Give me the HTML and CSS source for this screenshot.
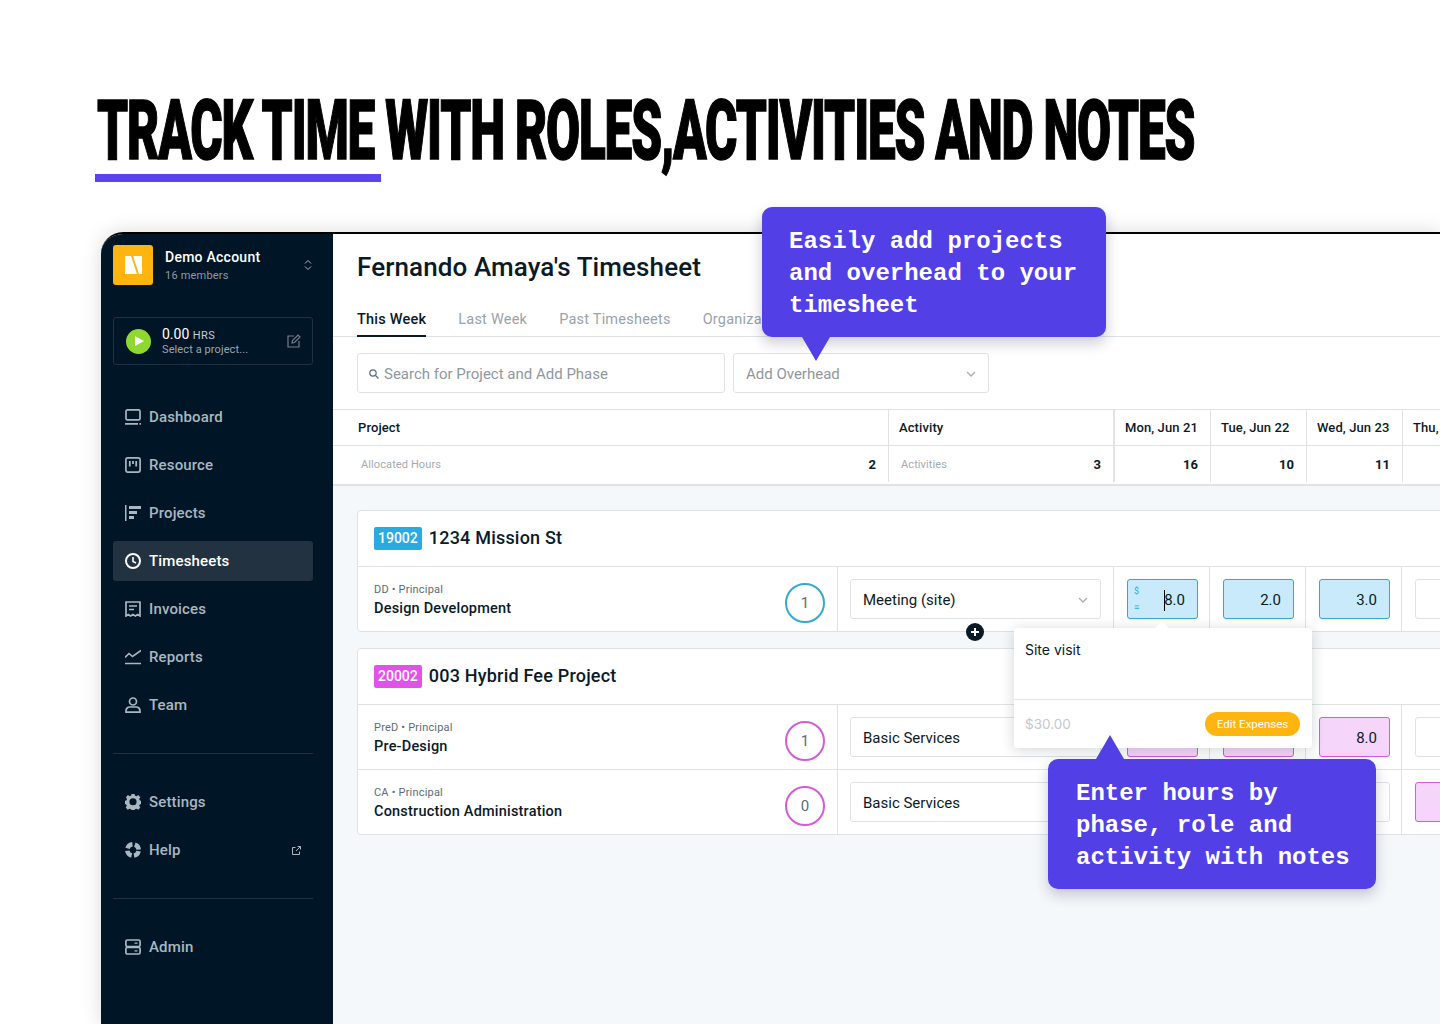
FILE: index.html
```html
<!DOCTYPE html>
<html lang="en">
  <head>
    <meta charset="utf-8">
    <title>Track time with roles, activities and notes</title>
    <link rel="stylesheet" href="styles.css">
  </head>
  <body>
    <header class="hero">
      <h1 class="hero-title">TRACK TIME WITH ROLES,ACTIVITIES AND NOTES</h1>
      <div class="hero-rule"></div>
    </header>

    <div class="app">
      <aside class="sidebar">
        <div class="account">
          <div class="account-logo">
            <svg width="17" height="18" viewBox="0 0 17 18"><path fill="#fff" d="M0 0h6l6 18H0zM8 0h9v18h-3z"/></svg>
          </div>
          <div class="account-text">
            <div class="account-name">Demo Account</div>
            <div class="account-sub">16 members</div>
          </div>
          <svg class="account-caret" width="8" height="12" viewBox="0 0 8 12" fill="none" stroke="#aeb8c1" stroke-width="1"><path d="M1 4.500 4 1.500l3 3M1 7.500l3 3 3-3"/></svg>
        </div>

        <div class="timer">
          <div class="timer-play"><svg width="9" height="10" viewBox="0 0 9 10"><path fill="#fff" d="M0 0l9 5-9 5z"/></svg></div>
          <div class="timer-text">
            <div class="timer-hours">0.00 <span>HRS</span></div>
            <div class="timer-sub">Select a project...</div>
          </div>
          <svg class="timer-edit" width="14" height="14" viewBox="0 0 14 14" fill="none" stroke="#6f7f8c" stroke-width="1.200"><path d="M7 2H1v11h11V7"/><path d="M5 9l.5-2.500L11 1l2 2-5.500 5.500z"/></svg>
        </div>

        <nav class="nav nav-main">
          <a class="nav-item"><svg width="16" height="16" viewBox="0 0 16 16" fill="none" stroke="currentColor" stroke-width="1.700"><rect x="1" y=".9" width="14" height="10" rx="1.500"/><path d="M0 14.800h13M14.500 14.800h1.500"/></svg>Dashboard</a>
          <a class="nav-item"><svg width="16" height="16" viewBox="0 0 16 16" fill="none" stroke="currentColor" stroke-width="1.700"><rect x=".9" y=".9" width="14.200" height="14.200" rx="2"/><path d="M4.800 4v5.500M8 4v3M11.200 4v5.500" stroke-width="1.800"/></svg>Resource</a>
          <a class="nav-item"><svg width="16" height="16" viewBox="0 0 16 16" fill="currentColor"><rect x="0" y="0" width="1.500" height="16"/><rect x="4" y="1" width="12" height="3"/><rect x="4" y="6" width="8" height="3"/><rect x="4" y="11" width="5" height="3"/></svg>Projects</a>
          <a class="nav-item active"><svg width="16" height="16" viewBox="0 0 16 16" fill="none" stroke="currentColor" stroke-width="2"><circle cx="8" cy="8" r="7"/><path d="M8 4v4.500l3 1.500" stroke-width="1.600"/></svg>Timesheets</a>
          <a class="nav-item"><svg width="16" height="16" viewBox="0 0 16 16" fill="none" stroke="currentColor" stroke-width="1.700"><path d="M1 15V1h14v14l-2.300-1.500-2.300 1.500L8 13.500 5.600 15l-2.300-1.500z"/><path d="M4 5h8M4 8.500h5"/></svg>Invoices</a>
          <a class="nav-item"><svg width="16" height="16" viewBox="0 0 16 16" fill="none" stroke="currentColor" stroke-width="1.600"><path d="M0 8.500l4-4 3.500 3L16 1.500M0 14.500h16"/></svg>Reports</a>
          <a class="nav-item"><svg width="16" height="16" viewBox="0 0 16 16" fill="none" stroke="currentColor" stroke-width="1.700"><circle cx="8" cy="4.500" r="3.500"/><path d="M1 15.200v-1.700c0-2 2-3.500 3.500-3.500h7c1.500 0 3.500 1.500 3.500 3.500v1.700z"/></svg>Team</a>
        </nav>

        <nav class="nav nav-second">
          <a class="nav-item"><svg width="16" height="16" viewBox="0 0 16 16"><path fill="currentColor" fill-rule="evenodd" d="M6.500 0h3l.4 2.100 1.500.7L13.300 1.700l2 2.200-1.100 1.800.6 1.500 2.200.5v3l-2.200.5-.6 1.500 1.100 1.800-2 2.200-1.900-1.100-1.500.7-.4 2.100h-3l-.4-2.100-1.500-.7-1.900 1.100-2-2.200 1.100-1.800-.6-1.500L-.8 10.700v-3l2.200-.5.6-1.500L.9 3.900l2-2.200 1.900 1.100 1.500-.7zM8 5a3.600 3.600 0 1 0 0 7.200A3.600 3.600 0 0 0 8 5z" transform="translate(0 -.6) scale(1 .98)"/></svg>Settings</a>
          <a class="nav-item"><svg width="16" height="16" viewBox="0 0 16 16" fill="none" stroke="currentColor" stroke-width="4.500"><circle cx="8" cy="8" r="5.700" stroke-dasharray="6.500 2.450" stroke-dashoffset="-1.200"/></svg>Help<svg class="nav-ext" width="9" height="9" viewBox="0 0 9 9" fill="none" stroke="currentColor" stroke-width="1"><path d="M3.500 1.500H.5v7h7V5.500M4 5l4.500-4.500M5.500.5h3v3"/></svg></a>
        </nav>

        <nav class="nav nav-admin">
          <a class="nav-item"><svg width="16" height="16" viewBox="0 0 16 16" fill="none" stroke="currentColor" stroke-width="1.700"><rect x=".9" y="1" width="14.200" height="6.500" rx="1.500"/><rect x=".9" y="8.500" width="14.200" height="6.500" rx="1.500"/><path d="M9.500 4.200h3M9.500 11.800h3" stroke-width="1.200"/></svg>Admin</a>
        </nav>
      </aside>

      <main class="main">
        <h2 class="page-title">Fernando Amaya's Timesheet</h2>

        <div class="tabs">
          <span class="tab active">This Week</span>
          <span class="tab">Last Week</span>
          <span class="tab">Past Timesheets</span>
          <span class="tab">Organization</span>
        </div>

        <div class="filters">
          <div class="field field-search">
            <svg width="10" height="10" viewBox="0 0 10 10" fill="none" stroke="#5d6b76" stroke-width="1.200"><circle cx="4" cy="4" r="3.200"/><path d="M6.500 6.500 9.500 9.500"/></svg>
            Search for Project and Add Phase
          </div>
          <div class="field field-overhead">
            Add Overhead
            <svg class="chevron" width="10" height="6" viewBox="0 0 10 6" fill="none" stroke="#a6aeb5" stroke-width="1.300"><path d="M1 1l4 4 4-4"/></svg>
          </div>
        </div>

        <div class="sheet-head">
          <div class="head-row">
            <div class="hcell hcell-project">Project</div>
            <div class="hcell hcell-activity">Activity</div>
            <div class="hcell hcell-day">Mon, Jun 21</div>
            <div class="hcell hcell-day">Tue, Jun 22</div>
            <div class="hcell hcell-day">Wed, Jun 23</div>
            <div class="hcell hcell-day">Thu,</div>
          </div>
          <div class="head-row head-totals">
            <div class="hcell hcell-project"><span class="total-label">Allocated Hours</span><b>2</b></div>
            <div class="hcell hcell-activity"><span class="total-label">Activities</span><b>3</b></div>
            <div class="hcell hcell-day num"><b>16</b></div>
            <div class="hcell hcell-day num"><b>10</b></div>
            <div class="hcell hcell-day num"><b>11</b></div>
            <div class="hcell hcell-day num"></div>
          </div>
        </div>

        <div class="sheet-body">
          <section class="card">
            <div class="card-head"><span class="code code-blue">19002</span>1234 Mission St</div>
            <div class="row row-blue">
              <div class="phase">
                <div class="phase-text">
                  <div class="phase-role">DD • Principal</div>
                  <div class="phase-name">Design Development</div>
                </div>
                <div class="count">1</div>
              </div>
              <div class="activity"><div class="select">Meeting (site)<svg class="chevron" width="10" height="6" viewBox="0 0 10 6" fill="none" stroke="#a6aeb5" stroke-width="1.300"><path d="M1 1l4 4 4-4"/></svg></div></div>
              <div class="day"><div class="hours filled focus">
                <span class="hour-icons">$<br>≡</span><span class="caret"></span>8.0
              </div></div>
              <div class="day"><div class="hours filled">2.0</div></div>
              <div class="day"><div class="hours filled">3.0</div></div>
              <div class="day"><div class="hours"></div></div>
            </div>
          </section>

          <section class="card">
            <div class="card-head"><span class="code code-pink">20002</span>003 Hybrid Fee Project</div>
            <div class="row row-pink">
              <div class="phase">
                <div class="phase-text">
                  <div class="phase-role">PreD • Principal</div>
                  <div class="phase-name">Pre-Design</div>
                </div>
                <div class="count">1</div>
              </div>
              <div class="activity"><div class="select">Basic Services</div></div>
              <div class="day"><div class="hours filled"></div></div>
              <div class="day"><div class="hours filled"></div></div>
              <div class="day"><div class="hours filled">8.0</div></div>
              <div class="day"><div class="hours"></div></div>
            </div>
            <div class="row row-pink">
              <div class="phase">
                <div class="phase-text">
                  <div class="phase-role">CA • Principal</div>
                  <div class="phase-name">Construction Administration</div>
                </div>
                <div class="count">0</div>
              </div>
              <div class="activity"><div class="select">Basic Services</div></div>
              <div class="day"><div class="hours"></div></div>
              <div class="day"><div class="hours"></div></div>
              <div class="day"><div class="hours"></div></div>
              <div class="day"><div class="hours filled"></div></div>
            </div>
          </section>
        </div>
      </main>
    </div>

    <div class="add-dot">
      <svg width="18" height="18" viewBox="0 0 18 18"><circle cx="9" cy="9" r="9" fill="#0b1a26"/><path d="M9 5v8M5 9h8" stroke="#fff" stroke-width="2"/></svg>
    </div>

    <div class="note">
      <div class="note-text">Site visit</div>
      <div class="note-foot">
        <span class="note-amount">$30.00</span>
        <span class="note-btn">Edit Expenses</span>
      </div>
    </div>

    <div class="callout callout-top">Easily add projects and overhead to your timesheet</div>
    <div class="callout callout-bottom">Enter hours by phase, role and activity with notes</div>
  </body>
</html>
```

FILE: styles.css
```css
* {
  box-sizing: border-box;
}

html,
body {
  margin: 0;
  height: 1024px;
  overflow: hidden;
}

body {
  position: relative;
  background: #fff;
  color: #0b1a26;
  font-family: 'Roboto', sans-serif;
  font-size: 14px;
}

/* headline */
.hero {
  height: 232px;
  padding: 88px 0 0 95px;
  overflow: hidden;
}

.hero-title {
  margin: 0 0 0 2px;
  width: 1900px;
  height: 86px;
  color: #000;
  font-family: 'Roboto', sans-serif;
  font-weight: 900;
  font-size: 84px;
  line-height: 86px;
  letter-spacing: -2px;
  white-space: nowrap;
  -webkit-text-stroke: 1.5px #000;
  transform: scaleX(0.589);
  transform-origin: left top;
}

.hero-rule {
  width: 286px;
  height: 8px;
  background: #5a43e8;
}

/* app frame */
.app {
  display: flex;
  width: 1339px;
  height: 792px;
  margin-left: 101px;
  border-top: 2px solid #000;
  border-top-left-radius: 22px;
  box-shadow: 0 0 20px rgba(0, 0, 0, 0.15);
  overflow: hidden;
}

.sidebar {
  flex: 0 0 232px;
  padding: 11px 20px 0 12px;
  background: #001626;
  color: #aab6c0;
}

.account {
  display: flex;
  align-items: center;
  height: 40px;
}

.account-logo {
  display: flex;
  align-items: center;
  justify-content: center;
  width: 40px;
  height: 40px;
  margin-right: 12px;
  border-radius: 3px;
  background: #ffb50f;
}

.account-text {
  flex: 1;
}

.account-name {
  color: #fff;
  font-size: 14px;
  font-weight: 500;
  line-height: 20px;
  letter-spacing: 0.25px;
}

.account-sub {
  margin-top: 1px;
  color: #8e9aa5;
  font-size: 11px;
  line-height: 16px;
  letter-spacing: 0.2px;
}

.account-caret {
  margin-right: 1px;
}

.timer {
  display: flex;
  align-items: center;
  height: 48px;
  margin-top: 32px;
  padding: 0 11px 0 12px;
  border: 1px solid #1f3040;
  border-radius: 3px;
}

.timer-play {
  display: flex;
  align-items: center;
  justify-content: center;
  width: 25px;
  height: 25px;
  margin-right: 11px;
  padding-left: 2px;
  border-radius: 50%;
  background: #8fd82f;
}

.timer-text {
  flex: 1;
}

.timer-hours {
  margin-top: 1px;
  color: #fff;
  font-size: 14px;
  line-height: 15px;
}

.timer-hours span {
  font-size: 11px;
  color: #c5ced6;
  letter-spacing: 0.4px;
}

.timer-sub {
  color: #9aa6b0;
  font-size: 11px;
  line-height: 13px;
  letter-spacing: 0.1px;
}

.nav {
  display: flex;
  flex-direction: column;
  gap: 8px;
}

.nav-main {
  margin-top: 32px;
  padding-bottom: 28px;
  border-bottom: 1px solid #1f3040;
}

.nav-second {
  margin-top: 28px;
  padding-bottom: 28px;
  border-bottom: 1px solid #1f3040;
}

.nav-admin {
  margin-top: 28px;
}

.nav-item {
  display: flex;
  align-items: center;
  gap: 8px;
  height: 40px;
  padding: 0 12px;
  border-radius: 3px;
  font-size: 15px;
  font-weight: 500;
  letter-spacing: 0.15px;
}

.nav-item.active {
  background: #223240;
  color: #fff;
}

.nav-ext {
  margin-left: auto;
  margin-right: 0;
}

/* main column */
.main {
  flex: 1;
  min-width: 0;
  display: flex;
  flex-direction: column;
  background: #fff;
}

.page-title {
  margin: 0;
  padding: 15px 0 0 24px;
  height: 68px;
  font-size: 26px;
  font-weight: 500;
  line-height: 36px;
  letter-spacing: 0.1px;
}

.tabs {
  display: flex;
  gap: 32px;
  height: 35px;
  padding-left: 24px;
  border-bottom: 1px solid #dfe3e6;
  white-space: nowrap;
}

.tab {
  height: 35px;
  padding-top: 9px;
  color: #9aa3aa;
  font-size: 14.500px;
  letter-spacing: 0.22px;
}

.tab.active {
  color: #0b1a26;
  font-weight: 500;
  border-bottom: 2px solid #0b1a26;
}

.filters {
  display: flex;
  gap: 8px;
  padding: 16px 24px;
}

.field {
  display: flex;
  align-items: center;
  height: 40px;
  padding-top: 2px;
  border: 1px solid #dfe3e6;
  border-radius: 3px;
  color: #8f989f;
  font-size: 15px;
  letter-spacing: 0;
}

.field-search {
  gap: 5px;
  width: 368px;
  padding-left: 11px;
}

.field-overhead {
  width: 256px;
  padding-left: 12px;
  padding-right: 12px;
}

.chevron {
  margin-left: auto;
}

.sheet-head {
  border-top: 1px solid #dfe3e6;
  border-bottom: 2px solid #dfe3e6;
}

.head-row {
  display: grid;
  grid-template-columns: 556px 226px repeat(4, 96px);
  height: 36px;
  border-bottom: 1px solid #dfe3e6;
}

.head-totals {
  height: 38px;
  padding-bottom: 2px;
  border-bottom: 0;
}

.hcell {
  display: flex;
  align-items: center;
  font-size: 13px;
  font-weight: 500;
  letter-spacing: 0.1px;
  white-space: nowrap;
  overflow: hidden;
}

.hcell-project {
  justify-content: space-between;
  padding: 0 12px 0 25px;
  border-right: 1px solid #dfe3e6;
}

.hcell-activity {
  justify-content: space-between;
  padding: 0 12px 0 10px;
  border-right: 2px solid #dfe3e6;
}

.hcell-day {
  padding-left: 10px;
  border-right: 1px solid #dfe3e6;
}

.hcell-day.num {
  justify-content: flex-end;
  padding: 0 12px 0 0;
}

.total-label {
  padding-left: 3px;
  color: #a3abb2;
  font-size: 11px;
  font-weight: 400;
}

.hcell-activity .total-label {
  padding-left: 2px;
}

.sheet-body {
  flex: 1;
  display: flex;
  flex-direction: column;
  gap: 16px;
  width: 1200px;
  padding: 24px 0 0 24px;
  background: #f5f8fa;
}

.card {
  border: 1px solid #dfe3e6;
  border-radius: 4px 0 0 4px;
  background: #fff;
}

.card-head {
  display: flex;
  align-items: center;
  gap: 7px;
  height: 55px;
  padding-left: 16px;
  padding-bottom: 2px;
  font-size: 18px;
  font-weight: 500;
  letter-spacing: 0.2px;
}

.code {
  margin-top: 2px;
  padding: 0 4px;
  border-radius: 2px;
  color: #fff;
  font-size: 14px;
  font-weight: 500;
  line-height: 23px;
  letter-spacing: 0;
}

.code-blue {
  background: #29abe2;
}

.code-pink {
  background: #e052e8;
}

.row {
  display: grid;
  grid-template-columns: 480px 276px repeat(4, 96px);
  height: 65px;
  border-top: 1px solid #dfe3e6;
}

.phase {
  display: flex;
  align-items: center;
  justify-content: space-between;
  padding: 0 12px 0 16px;
  border-right: 1px solid #dfe3e6;
}

.phase-text {
  margin-top: 3px;
}

.phase-role {
  color: #5d6b76;
  font-size: 11px;
  line-height: 16px;
  letter-spacing: 0.2px;
}

.phase-name {
  font-size: 14.500px;
  font-weight: 500;
  line-height: 22px;
  letter-spacing: 0.2px;
}

.count {
  display: flex;
  align-items: center;
  justify-content: center;
  width: 40px;
  height: 40px;
  margin-top: 8px;
  border: 2px solid;
  border-radius: 50%;
  color: #5d6b76;
  font-size: 15px;
}

.row-blue .count {
  border-color: #35a9d1;
}

.row-pink .count {
  border-color: #d55bdc;
}

.activity {
  padding: 12px 12px 0;
  border-right: 1px solid #dfe3e6;
}

.select {
  display: flex;
  align-items: center;
  height: 40px;
  padding: 2px 12px 0;
  border: 1px solid #dfe3e6;
  border-radius: 3px;
  font-size: 15px;
  letter-spacing: 0;
}

.day {
  padding: 12px 11px 0 13px;
  border-right: 1px solid #dfe3e6;
}

.hours {
  position: relative;
  display: flex;
  align-items: center;
  justify-content: flex-end;
  width: 71px;
  height: 40px;
  padding: 2px 12px 0 0;
  border: 1px solid #dfe3e6;
  border-radius: 3px;
  font-family: 'Roboto', sans-serif;
  font-size: 15px;
  color: #0b1a26;
}

.row-blue .filled {
  border-color: #35a9d1;
  background: #c8eafa;
}

.row-pink .filled {
  border-color: #d55bdc;
  background: #f6d5fa;
}

.hour-icons {
  position: absolute;
  left: 6px;
  top: 3px;
  color: #29abe2;
  font-size: 9px;
  line-height: 16px;
}

.caret {
  width: 1px;
  height: 21px;
  margin-right: -1px;
  background: #000;
}

/* things lying over the sheet */
.add-dot {
  position: absolute;
  left: 966px;
  top: 623px;
  width: 18px;
  height: 18px;
}

.note {
  position: absolute;
  left: 1014px;
  top: 628px;
  width: 298px;
  height: 120px;
  border-radius: 3px;
  background: #fff;
  box-shadow: 0 2px 14px rgba(0, 20, 40, 0.18);
}

.note::before {
  content: '';
  position: absolute;
  left: 141px;
  top: -7px;
  border: 7px solid transparent;
  border-top: 0;
  border-bottom-color: #fff;
}

.note-text {
  height: 72px;
  padding: 13px 11px 0;
  border-bottom: 1px solid #e4e7e9;
  color: #0b1a26;
  font-family: 'Inter', sans-serif;
  font-size: 14px;
  line-height: 18px;
}

.note-foot {
  display: flex;
  align-items: center;
  justify-content: space-between;
  height: 48px;
  padding: 0 12px 0 11px;
}

.note-amount {
  color: #c3c8cc;
  font-family: 'Inter', sans-serif;
  font-size: 13.500px;
}

.note-btn {
  width: 95px;
  border-radius: 12px;
  background: #ffb50f;
  color: #fff;
  font-size: 11.500px;
  line-height: 24px;
  text-align: center;
}

.callout {
  position: absolute;
  height: 130px;
  padding: 19px 20px 0 27px;
  border-radius: 10px;
  background: #5240e6;
  box-shadow: 0 6px 14px rgba(20, 20, 60, 0.22);
  color: #fff;
  font-family: 'Liberation Mono', monospace;
  font-size: 24px;
  font-weight: 700;
  line-height: 32px;
}

.callout::after {
  content: '';
  position: absolute;
  border-style: solid;
  border-color: transparent;
}

.callout-top {
  left: 762px;
  top: 207px;
  width: 344px;
}

.callout-top::after {
  left: 40px;
  top: 130px;
  border-width: 24px 14px 0;
  border-top-color: #5240e6;
}

.callout-bottom {
  left: 1048px;
  top: 759px;
  width: 328px;
  padding-left: 28px;
}

.callout-bottom::after {
  left: 48px;
  top: -24px;
  border-width: 0 14px 24px;
  border-bottom-color: #5240e6;
}
```
